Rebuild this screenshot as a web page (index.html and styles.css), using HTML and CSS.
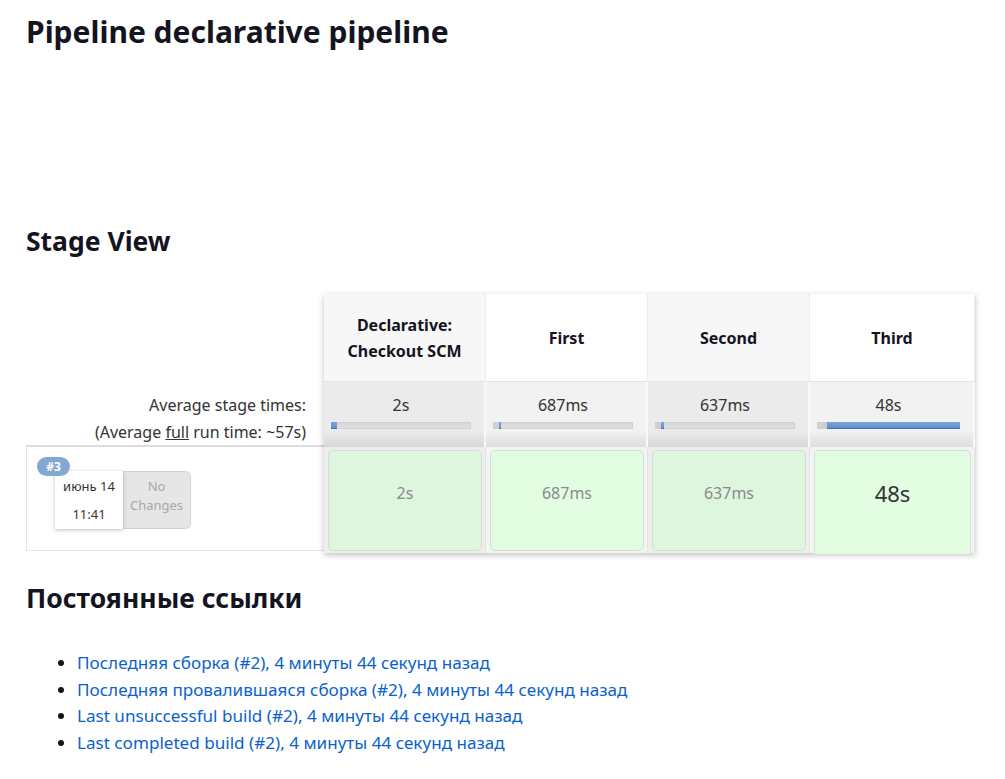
FILE: index.html
```html
<!DOCTYPE html>
<html lang="ru">
<head>
<meta charset="utf-8">
<title>Pipeline declarative pipeline</title>
<link rel="stylesheet" href="styles.css">
</head>
<body>
<h1 class="title">Pipeline declarative pipeline</h1>

<h2 class="section-title stage-title">Stage View</h2>

<div class="stage-view">
  <div class="labels">
    <div class="label-head"></div>
    <div class="label-avg">
      <div>Average stage times:</div>
      <div>(Average <u>full</u> run time: ~57s)</div>
    </div>
    <div class="build-row">
      <div class="build-wrap">
        <span class="badge">#3</span>
        <div class="build-date">
          <div>июнь 14</div>
          <div>11:41</div>
        </div>
        <div class="changes">No<br>Changes</div>
      </div>
    </div>
  </div>

  <div class="stage-table">
    <div class="head odd"><span>Declarative:<br>Checkout SCM</span></div>
    <div class="head even"><span>First</span></div>
    <div class="head odd"><span>Second</span></div>
    <div class="head even"><span>Third</span></div>

    <div class="avg odd">
      <div class="avg-time">2s</div>
      <div class="bar"><span class="bar-gap" style="width:0px"></span><span class="bar-fill" style="width:6px"></span></div>
    </div>
    <div class="avg even">
      <div class="avg-time">687ms</div>
      <div class="bar"><span class="bar-gap" style="width:6px"></span><span class="bar-fill" style="width:2px"></span></div>
    </div>
    <div class="avg odd">
      <div class="avg-time">637ms</div>
      <div class="bar"><span class="bar-gap" style="width:6px"></span><span class="bar-fill" style="width:3px"></span></div>
    </div>
    <div class="avg even">
      <div class="avg-time">48s</div>
      <div class="bar"><span class="bar-gap" style="width:10px"></span><span class="bar-fill" style="width:133px"></span></div>
    </div>

    <div class="cell odd"><div class="box">2s</div></div>
    <div class="cell even"><div class="box">687ms</div></div>
    <div class="cell odd"><div class="box">637ms</div></div>
    <div class="cell even"><div class="box running">48s</div></div>
  </div>
</div>

<h2 class="section-title links-title">Постоянные ссылки</h2>
<ul class="links">
  <li><a href="#">Последняя сборка (#2), 4 минуты 44 секунд назад</a></li>
  <li><a href="#">Последняя провалившаяся сборка (#2), 4 минуты 44 секунд назад</a></li>
  <li><a href="#">Last unsuccessful build (#2), 4 минуты 44 секунд назад</a></li>
  <li><a href="#">Last completed build (#2), 4 минуты 44 секунд назад</a></li>
</ul>
</body>
</html>
```

FILE: styles.css
```css
body {
  margin: 0;
  padding: 0 26px;
  font-family: "Noto Sans", "Open Sans", sans-serif;
  color: #14141f;
  background: #fff;
}

.title {
  margin: 0;
  padding-top: 14px;
  font-size: 30px;
  line-height: 36px;
  font-weight: 700;
}

.section-title {
  margin: 0;
  font-size: 26.5px;
  line-height: 32px;
  font-weight: 700;
}

.stage-title {
  margin-top: 175px;
}

.stage-view {
  display: flex;
  margin-top: 37px;
  font-size: 16px;
}

.labels {
  width: 298px;
  display: flex;
  flex-direction: column;
}

.label-head {
  height: 88px;
}

.label-avg {
  height: 65px;
  padding: 10px 18px 0 0;
  box-sizing: border-box;
  text-align: right;
  color: #333;
  line-height: 27px;
  border-bottom: 2px solid #dcdcdc;
}

.build-row {
  height: 104px;
  border: 1px solid #e6e6e6;
  border-top: none;
  border-right: none;
  box-sizing: border-box;
  padding: 24px 0 0 28px;
}

.build-wrap {
  position: relative;
  display: flex;
  width: 136px;
}

.badge {
  position: absolute;
  left: -18px;
  top: -14px;
  width: 33px;
  height: 19px;
  border-radius: 10px;
  background: #85a8d2;
  color: #fff;
  font-size: 12px;
  font-weight: 700;
  line-height: 19px;
  text-align: center;
  z-index: 2;
}

.build-date {
  width: 68px;
  height: 58px;
  background: #fff;
  box-shadow: 0 1px 4px rgba(0, 0, 0, 0.25);
  font-size: 13px;
  color: #333;
  text-align: center;
  display: flex;
  flex-direction: column;
  justify-content: center;
  line-height: 28px;
  position: relative;
  z-index: 1;
}

.changes {
  width: 68px;
  height: 58px;
  box-sizing: border-box;
  background: #e6e6e6;
  border: 1px solid #d2d2d2;
  border-left: none;
  border-radius: 0 6px 6px 0;
  color: #a8a8a8;
  font-size: 13px;
  line-height: 19px;
  text-align: center;
  padding-top: 5px;
}

.stage-table {
  width: 651px;
  display: grid;
  grid-template-columns: repeat(4, 1fr);
  grid-template-rows: 88px 65px 106px;
  box-shadow: 0 2px 6px rgba(0, 0, 0, 0.25);
}

.head {
  display: flex;
  align-items: center;
  justify-content: center;
  text-align: center;
  font-weight: 700;
  line-height: 26px;
  border-right: 1px solid #ececec;
  border-bottom: 1px solid #e4e4e4;
}

.head.odd { background: #f7f7f7; }
.head.even { background: #fff; }

.avg {
  padding: 10px 13px 0 7px;
  box-sizing: border-box;
  text-align: center;
  color: #333;
  border-right: 2px solid #f8f8f8;
}

.avg.odd { background: linear-gradient(#ebebeb 0, #ebebeb 75%, #d8d8d8 100%); }
.avg.even { background: linear-gradient(#f2f2f2 0, #f2f2f2 75%, #dddddd 100%); }

.avg-time {
  line-height: 26px;
}

.bar {
  display: flex;
  height: 7px;
  margin-top: 4px;
  background: linear-gradient(#d4d4d4, #e2e2e2);
  box-shadow: inset 0 0 0 1px #d0d0d0;
}

.bar-gap {
  background: #cfcfcf;
}

.bar-fill {
  background: linear-gradient(#7ea4d8, #5b8bd0);
  box-shadow: inset 0 -1px 0 #3f74c4;
}

.cell {
  padding: 3px 3px 0 4px;
  box-sizing: border-box;
  border-right: 1px solid #e4e4e4;
}

.cell.odd { background: #eeeeee; }
.cell.even { background: #f4f4f4; }

.box {
  height: 101px;
  box-sizing: border-box;
  border: 1px solid #d6dcd6;
  border-radius: 5px;
  padding-top: 30px;
  line-height: 24px;
  text-align: center;
  color: #8a8a8a;
  font-size: 16px;
}

.cell.odd .box { background: #def6de; }
.cell.even .box { background: #e3fde3; }

.box.running {
  color: #333;
  font-size: 22px;
  height: 104px;
  border-bottom: none;
  border-radius: 5px 5px 0 0;
}

.links-title {
  margin-top: 29px;
}

.links {
  margin: 36px 0 0;
  padding-left: 51px;
  font-size: 17.1px;
  line-height: 26.7px;
}

.links a {
  color: #0b62cc;
  text-decoration: none;
}
```
